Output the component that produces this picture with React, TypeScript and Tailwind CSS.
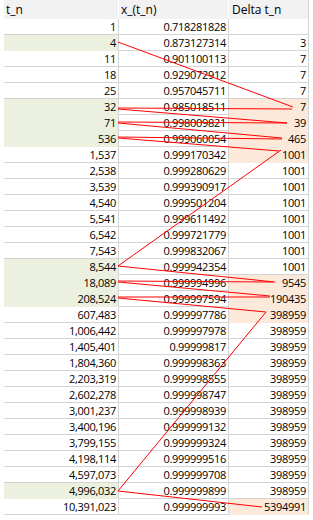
import React from "react";

type Row = { t: string; x: string; d: string; g?: boolean; p?: boolean };

const rows: Row[] = [
  { t: "1", x: "0.718281828", d: "" },
  { t: "4", x: "0.873127314", d: "3", g: true },
  { t: "11", x: "0.901100113", d: "7" },
  { t: "18", x: "0.929072912", d: "7" },
  { t: "25", x: "0.957045711", d: "7" },
  { t: "32", x: "0.985018511", d: "7", g: true, p: true },
  { t: "71", x: "0.998009821", d: "39", g: true, p: true },
  { t: "536", x: "0.999060054", d: "465", g: true, p: true },
  { t: "1,537", x: "0.999170342", d: "1001", p: true },
  { t: "2,538", x: "0.999280629", d: "1001" },
  { t: "3,539", x: "0.999390917", d: "1001" },
  { t: "4,540", x: "0.999501204", d: "1001" },
  { t: "5,541", x: "0.999611492", d: "1001" },
  { t: "6,542", x: "0.999721779", d: "1001" },
  { t: "7,543", x: "0.999832067", d: "1001" },
  { t: "8,544", x: "0.999942354", d: "1001", g: true },
  { t: "18,089", x: "0.999994996", d: "9545", g: true, p: true },
  { t: "208,524", x: "0.999997594", d: "190435", g: true, p: true },
  { t: "607,483", x: "0.999997786", d: "398959", p: true },
  { t: "1,006,442", x: "0.999997978", d: "398959" },
  { t: "1,405,401", x: "0.99999817", d: "398959" },
  { t: "1,804,360", x: "0.999998363", d: "398959" },
  { t: "2,203,319", x: "0.999998555", d: "398959" },
  { t: "2,602,278", x: "0.999998747", d: "398959" },
  { t: "3,001,237", x: "0.999998939", d: "398959" },
  { t: "3,400,196", x: "0.999999132", d: "398959" },
  { t: "3,799,155", x: "0.999999324", d: "398959" },
  { t: "4,198,114", x: "0.999999516", d: "398959" },
  { t: "4,597,073", x: "0.999999708", d: "398959" },
  { t: "4,996,032", x: "0.999999899", d: "398959", g: true },
  { t: "10,391,023", x: "0.999999993", d: "5394991", p: true },
];

const lines: [number, number, number, number][] = [
  [118, 42, 293, 107],
  [118, 108, 292, 109],
  [118, 109, 287, 123],
  [118, 122, 287, 123],
  [118, 123, 282, 138],
  [118, 137, 282, 139],
  [118, 138, 279, 151],
  [281, 150, 118, 266],
  [118, 266, 275, 282],
  [118, 281, 273, 282],
  [118, 282, 270, 296],
  [118, 297, 270, 297],
  [118, 298, 266, 312],
  [266, 312, 118, 491],
  [118, 491, 262, 507],
];

const font = { fontFamily: '"Open Sans", "Liberation Sans", sans-serif' };

export default function App() {
  return (
    <div className="relative w-[313px] h-[520px] overflow-hidden bg-white text-black" style={font}>
      <div className="flex flex-col pl-[4px]">
        <div className="flex h-[19px] text-[12px] leading-[19px]">
          <div className="w-[115px] bg-[#f2f2f2] border-r border-white pl-[2px]">t_n</div>
          <div className="w-[110px] bg-[#f2f2f2] border-r border-white pl-[2px]">x_(t_n)</div>
          <div className="w-[80px] bg-[#f2f2f2] border-r border-[#d4d4d4] pl-[3px]">Delta t_n</div>
        </div>
        {rows.map((r, i) => (
          <div key={i} className="flex h-[16px] text-[11px] leading-[16px] tracking-[-0.3px]">
            <div
              className={
                r.g
                  ? "w-[115px] bg-[#ebf1de] border-b border-r border-b-[#ebf1de] border-r-[#d4d4d4] text-right pr-[2px]"
                  : "w-[115px] bg-white border-b border-r border-[#d4d4d4] text-right pr-[2px]"
              }
            >
              {r.t}
            </div>
            <div className="w-[110px] border-b border-r border-[#d4d4d4] text-right pr-[2px]">{r.x}</div>
            <div
              className={
                r.p
                  ? "w-[80px] bg-[#fde9d9] border-b border-r border-b-[#fde9d9] border-r-[#d4d4d4] text-right pr-[2px]"
                  : "w-[80px] bg-white border-b border-r border-[#d4d4d4] text-right pr-[2px]"
              }
            >
              {r.d}
            </div>
          </div>
        ))}
      </div>
      <svg className="absolute left-0 top-0 pointer-events-none" width={313} height={520} viewBox="0 0 313 520">
        {lines.map(([x1, y1, x2, y2], i) => (
          <line key={i} x1={x1} y1={y1} x2={x2} y2={y2} stroke="#ff0000" strokeWidth={1} />
        ))}
      </svg>
    </div>
  );
}
